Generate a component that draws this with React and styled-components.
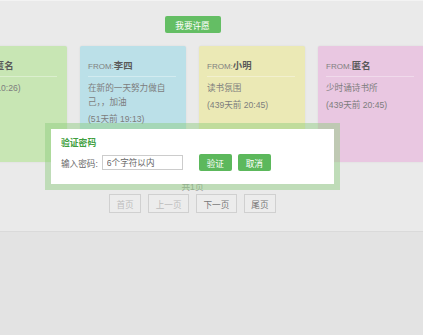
import styled, { createGlobalStyle } from 'styled-components'

const GlobalStyle = createGlobalStyle`
 body {
  margin: 0;
  background: #e3e3e3;
  font-family: "Liberation Sans", "Noto Sans CJK SC", sans-serif;
 }
`

const Page = styled.div`
 position: relative;
 width: 423px;
 height: 335px;
 overflow: hidden;
 display: flex;
 flex-direction: column;
`
const Top = styled.section`
 height: 232px;
 flex-shrink: 0;
 background: #eaeaea;
 border-top: 1px solid #f3f3f3;
 border-bottom: 1px solid #dadada;
 box-sizing: border-box;
`
const Bottom = styled.div`
 flex: 1;
 background: #e3e3e3;
`
const Main = styled.div`
 width: 385px;
 padding-top: 15px;
 display: flex;
 flex-direction: column;
 align-items: center;
`
const WishButton = styled.button`
 width: 56px;
 height: 17px;
 border: 0;
 border-radius: 2px;
 padding: 0;
 background: #64be64;
 color: #fff;
 font: inherit;
 font-size: 8.6px;
`
const CardRow = styled.div`
 align-self: flex-start;
 display: flex;
 gap: 13px;
 margin-top: 13px;
 margin-left: -39px;
`
const Card = styled.div`
 flex-shrink: 0;
 width: 106px;
 height: 116px;
 box-sizing: border-box;
 padding: 13px 10px 0 8px;
 background: ${p => p.$bg};
 border-radius: 2px;
 box-shadow: 0 0 2px rgba(0, 0, 0, 0.08);
 color: #7d7d7d;
 font-size: 8.6px;
`
const CardTitle = styled.div`
 line-height: 14px;
 padding-bottom: 2px;
 border-bottom: 1px solid rgba(255, 255, 255, 0.35);
 color: #808080;
 font-size: 8px;
 b {
  font-size: 9.4px;
  color: #5a5a5a;
 }
`
const CardText = styled.div`
 margin-top: 4px;
 line-height: 14px;
`
const CardDate = styled.div`
 margin-top: 3px;
 line-height: 14px;
`
const PageInfo = styled.div`
 margin-top: 19px;
 line-height: 12px;
 font-size: 8.6px;
 color: #999;
`
const Pager = styled.div`
 display: flex;
 gap: 7px;
 margin-top: 1px;
`
const PageButton = styled.button`
 height: 19px;
 padding: 0 6.5px;
 border: 1px solid #d0d0d0;
 background: #ececec;
 font: inherit;
 font-size: 8.6px;
 color: ${p => (p.disabled ? '#bcbcbc' : '#777')};
`
const Modal = styled.div`
 position: absolute;
 left: 45px;
 top: 123px;
 width: 295px;
 height: 67px;
 box-sizing: border-box;
 border: 6px solid rgba(140, 205, 125, 0.45);
 background: #fff;
 background-clip: padding-box;
 padding: 8px 10px 0;
`
const ModalTitle = styled.div`
 line-height: 12px;
 font-size: 8.8px;
 font-weight: bold;
 color: #3f9f3f;
`
const ModalRow = styled.div`
 display: flex;
 align-items: center;
 margin-top: 5px;
 font-size: 8.6px;
 color: #666;
`
const Input = styled.input`
 width: 81px;
 height: 15px;
 box-sizing: border-box;
 margin-left: 4px;
 padding: 0 4px;
 border: 1px solid #ccc;
 font: inherit;
 font-size: 8.6px;
 &::placeholder {
  color: #666;
 }
`
const ActionButton = styled.button`
 width: 33px;
 height: 17px;
 padding: 0;
 margin-left: ${p => p.$gap}px;
 border: 0;
 border-radius: 2px;
 background: #5cb85c;
 color: #fff;
 font: inherit;
 font-size: 8.6px;
`

const cards = [
 { bg: '#c8e6b4', name: '匿名', text: '', date: '(5天前 10:26)' },
 { bg: '#bbe0e8', name: '李四', text: '在新的一天努力做自己，，加油', date: '(51天前 19:13)' },
 { bg: '#ebe9b5', name: '小明', text: '读书氛围', date: '(439天前 20:45)' },
 { bg: '#e9c7e1', name: '匿名', text: '少时诵诗书所', date: '(439天前 20:45)' },
]

function App() {
 return (
  <Page>
   <GlobalStyle />
   <Top>
    <Main>
     <WishButton>我要许愿</WishButton>
     <CardRow>
      {cards.map((c, i) => (
       <Card key={i} $bg={c.bg}>
        <CardTitle>
         FROM:<b>{c.name}</b>
        </CardTitle>
        <CardText>{c.text}</CardText>
        <CardDate>{c.date}</CardDate>
       </Card>
      ))}
     </CardRow>
     <PageInfo>共1页</PageInfo>
     <Pager>
      <PageButton disabled>首页</PageButton>
      <PageButton disabled>上一页</PageButton>
      <PageButton>下一页</PageButton>
      <PageButton>尾页</PageButton>
     </Pager>
    </Main>
   </Top>
   <Bottom />
   <Modal>
    <ModalTitle>验证密码</ModalTitle>
    <ModalRow>
     输入密码:
     <Input placeholder="6个字符以内" />
     <ActionButton $gap={16}>验证</ActionButton>
     <ActionButton $gap={6}>取消</ActionButton>
    </ModalRow>
   </Modal>
  </Page>
 )
}

export default App
